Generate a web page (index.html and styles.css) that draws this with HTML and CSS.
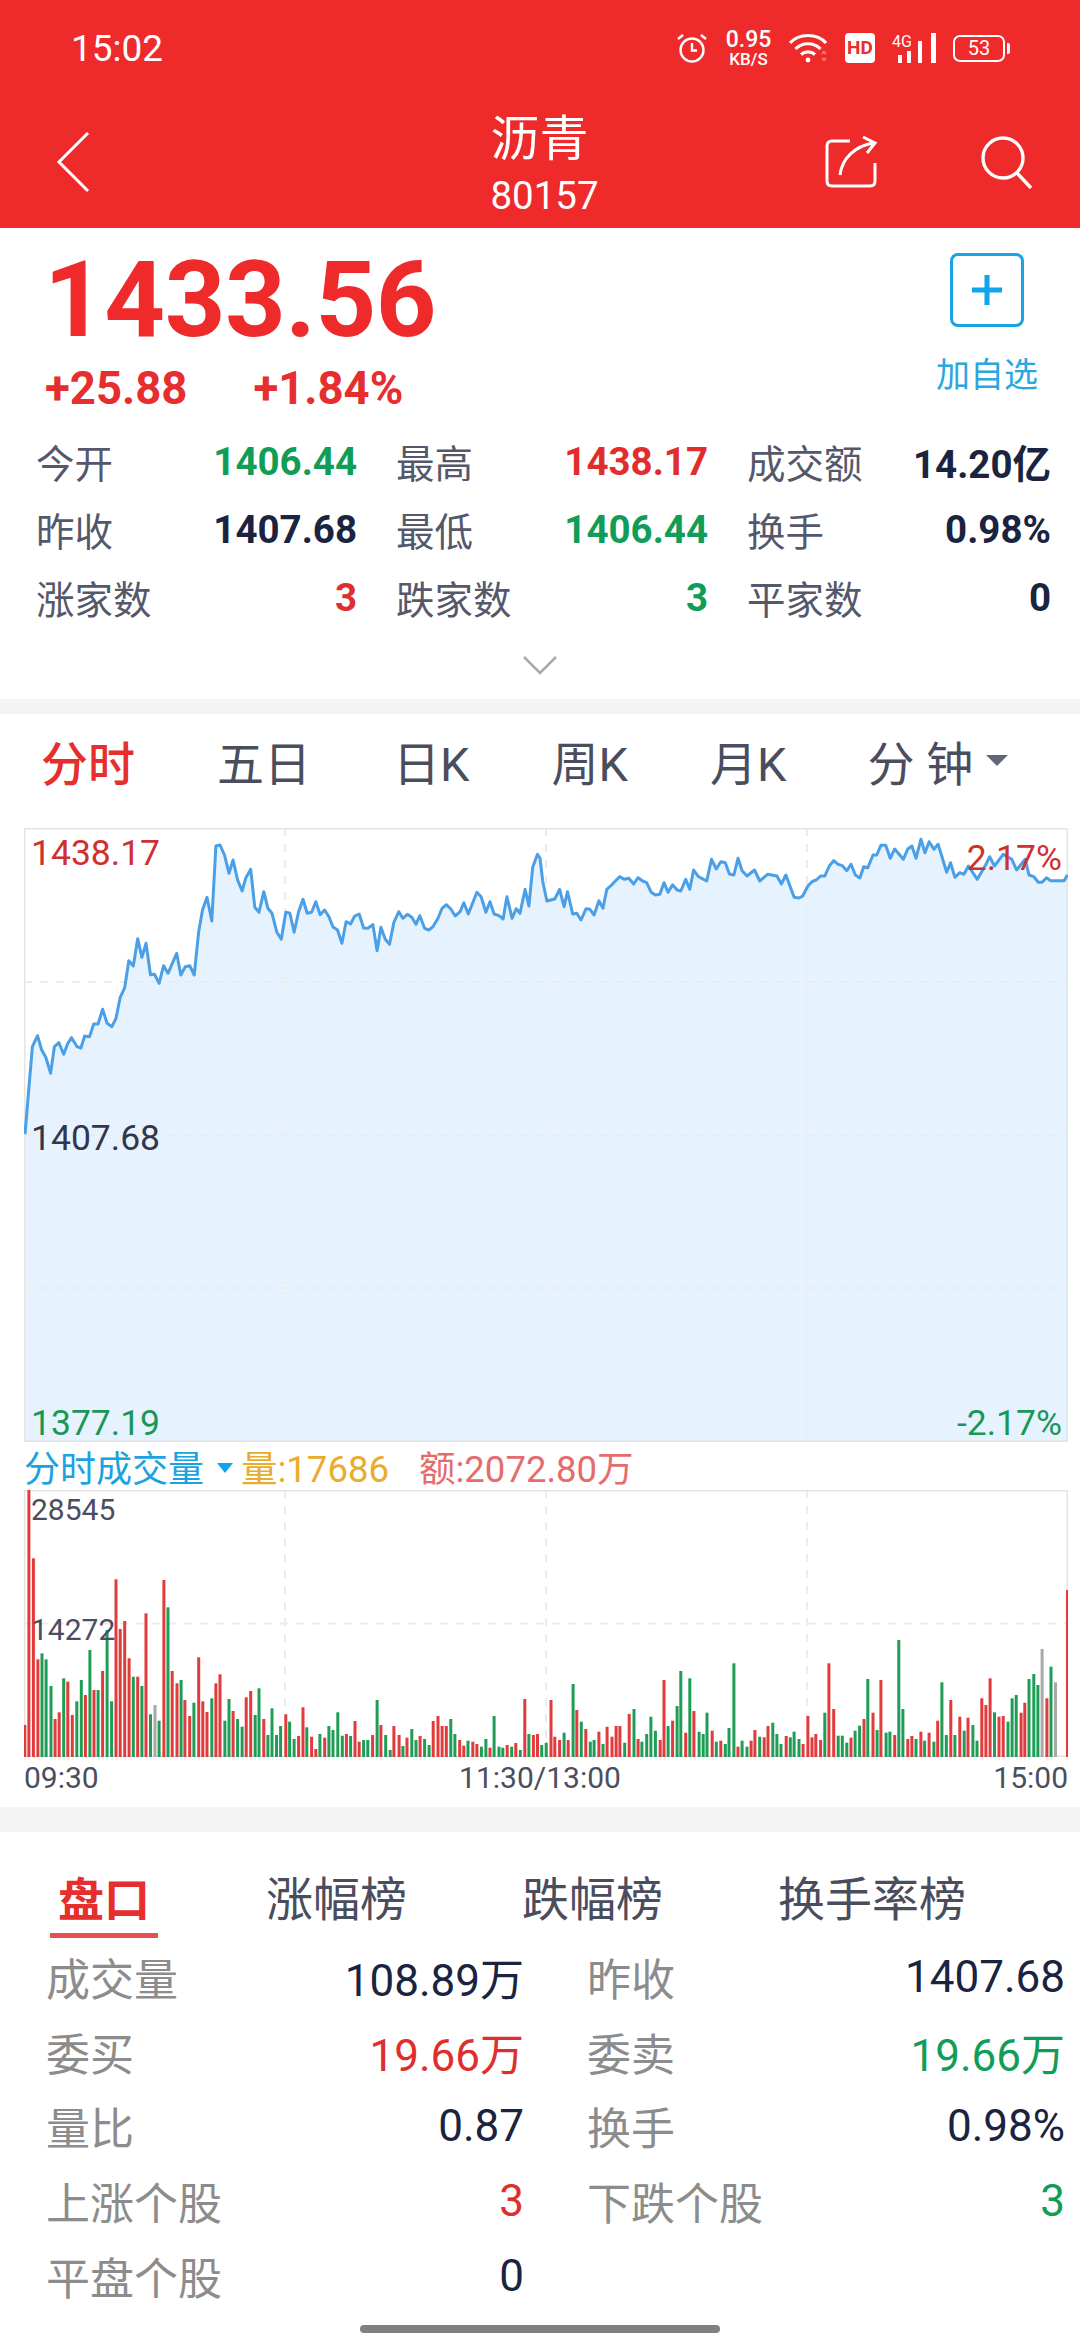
FILE: index.html
```html
<!DOCTYPE html>
<html lang="zh-CN">

<head>
    <meta charset="UTF-8">
    <title>沥青</title>
    <link rel="stylesheet" href="styles.css">
</head>

<body>
    <header class="topbar">
        <div class="status">
            <span class="status-time">15:02</span>
            <div class="status-icons">
                <svg width="32" height="30" viewBox="0 0 32 30" fill="none" stroke="#fff" stroke-width="2.4">
                    <circle cx="16" cy="17" r="11.5" />
                    <path d="M16 10v7.5h5" />
                    <path d="M2 6l5-4M30 6l-5-4" stroke-width="2.6" />
                </svg>
                <div class="net-speed">
                    <span class="net-value">0.95</span>
                    <span class="net-unit">KB/S</span>
                </div>
                <svg width="39" height="30" viewBox="0 0 39 30" fill="none" stroke="#fff" stroke-width="3.2">
                    <path d="M1 10C10 0 28 0 37 10" />
                    <path d="M6.500 16C13 9 25 9 31.500 16" />
                    <path d="M12 21.500C16 18 22 18 26 21.500" />
                    <circle cx="19" cy="27" r="2.400" fill="#fff" stroke="none" />
                    <path d="M33 21l2-2.500 2 2.500M33 25l2 2.500 2-2.500" stroke="#f78a8a" stroke-width="1.400" />
                </svg>
                <span class="hd-badge">HD</span>
                <div class="signal">
                    <span class="signal-text">4G</span>
                    <svg width="44" height="30" viewBox="0 0 44 30" fill="#fff">
                        <rect x="6" y="22" width="4" height="8" />
                        <rect x="15" y="18" width="4" height="12" />
                        <rect x="26" y="8" width="4" height="22" />
                        <rect x="39" y="0" width="5" height="30" />
                    </svg>
                </div>
                <div class="battery"><span>53</span></div>
            </div>
        </div>
        <nav class="nav">
            <svg class="nav-back" width="34" height="62" viewBox="0 0 34 62" fill="none" stroke="#fff" stroke-width="3">
                <path d="M32 2L3 31l29 29" />
            </svg>
            <div class="nav-title">
                <div class="nav-name">沥青</div>
                <div class="nav-code">80157</div>
            </div>
            <div class="nav-actions">
                <svg width="56" height="54" viewBox="0 0 56 54" fill="none" stroke="#fff" stroke-width="3">
                    <path d="M26 6H8Q3 6 3 11V46Q3 51 8 51H46Q51 51 51 46V28" />
                    <path d="M16 40C18 24 30 11 50 8" />
                    <path d="M39 2l12 6-8 10" />
                </svg>
                <svg width="54" height="54" viewBox="0 0 54 54" fill="none" stroke="#fff" stroke-width="3.400">
                    <circle cx="23" cy="23" r="20" />
                    <path d="M37 38l14 15" />
                </svg>
            </div>
        </nav>
    </header>

    <section class="quote">
        <div class="quote-head">
            <div>
                <div class="price">1433.56</div>
                <div class="change">
                    <span>+25.88</span>
                    <span>+1.84%</span>
                </div>
            </div>
            <div class="add-fav">
                <div class="add-box">
                    <svg width="34" height="34" viewBox="0 0 34 34" stroke="#0fa5ee" stroke-width="5">
                        <path d="M17 2v30M2 17h30" />
                    </svg>
                </div>
                <div class="add-text">加自选</div>
            </div>
        </div>

        <div class="stats">
            <div class="stat"><span class="stat-label">今开</span><span class="stat-value down">1406.44</span></div>
            <div class="stat"><span class="stat-label">最高</span><span class="stat-value up">1438.17</span></div>
            <div class="stat"><span class="stat-label">成交额</span><span class="stat-value">14.20亿</span></div>
            <div class="stat"><span class="stat-label">昨收</span><span class="stat-value">1407.68</span></div>
            <div class="stat"><span class="stat-label">最低</span><span class="stat-value down">1406.44</span></div>
            <div class="stat"><span class="stat-label">换手</span><span class="stat-value">0.98%</span></div>
            <div class="stat"><span class="stat-label">涨家数</span><span class="stat-value up">3</span></div>
            <div class="stat"><span class="stat-label">跌家数</span><span class="stat-value down">3</span></div>
            <div class="stat"><span class="stat-label">平家数</span><span class="stat-value">0</span></div>
        </div>

        <div class="expand">
            <svg width="34" height="20" viewBox="0 0 34 20" fill="none" stroke="#a8a8ae" stroke-width="2.500">
                <path d="M1 2l16 16L33 2" />
            </svg>
        </div>
    </section>

    <div class="band band-first"></div>

    <div class="period-tabs">
        <span class="period period-active">分时</span>
        <span class="period">五日</span>
        <span class="period">日K</span>
        <span class="period">周K</span>
        <span class="period">月K</span>
        <span class="period period-last">分 钟<i class="period-caret"></i></span>
    </div>

    <div class="chart price-chart">
        <svg id="price-svg" width="1044" height="614" viewBox="0 0 1044 614"></svg>
        <span class="chart-label label-top-left up-soft">1438.17</span>
        <span class="chart-label label-mid-left">1407.68</span>
        <span class="chart-label label-bottom-left down-soft">1377.19</span>
        <span class="chart-label label-top-right up-soft">2.17%</span>
        <span class="chart-label label-bottom-right down-soft">-2.17%</span>
    </div>

    <div class="legend">
        <span class="legend-name">分时成交量</span>
        <i class="legend-caret"></i>
        <span class="legend-vol">量:17686</span>
        <span class="legend-amt">额:2072.80万</span>
    </div>

    <div class="chart volume-chart">
        <svg id="volume-svg" width="1044" height="267" viewBox="0 0 1044 267"></svg>
        <span class="volume-label label-max">28545</span>
        <span class="volume-label label-half">14272</span>
    </div>

    <div class="axis">
        <span>09:30</span>
        <span class="axis-mid">11:30/13:00</span>
        <span class="axis-end">15:00</span>
    </div>

    <div class="band band-second"></div>

    <div class="sub-tabs">
        <span class="sub-tab sub-tab-active">盘口</span>
        <span class="sub-tab">涨幅榜</span>
        <span class="sub-tab">跌幅榜</span>
        <span class="sub-tab">换手率榜</span>
    </div>

    <div class="detail">
        <div class="detail-row"><span class="detail-label">成交量</span><span class="detail-value">108.89万</span></div>
        <div class="detail-row"><span class="detail-label">昨收</span><span class="detail-value">1407.68</span></div>
        <div class="detail-row"><span class="detail-label">委买</span><span class="detail-value up">19.66万</span></div>
        <div class="detail-row"><span class="detail-label">委卖</span><span class="detail-value down">19.66万</span></div>
        <div class="detail-row"><span class="detail-label">量比</span><span class="detail-value">0.87</span></div>
        <div class="detail-row"><span class="detail-label">换手</span><span class="detail-value">0.98%</span></div>
        <div class="detail-row"><span class="detail-label">上涨个股</span><span class="detail-value up">3</span></div>
        <div class="detail-row"><span class="detail-label">下跌个股</span><span class="detail-value down">3</span></div>
        <div class="detail-row"><span class="detail-label">平盘个股</span><span class="detail-value">0</span></div>
    </div>

    <div class="home-bar"></div>

    <script src="script.js"></script>
</body>

</html>
```

FILE: styles.css
```css
* {
    box-sizing: border-box;
}

body {
    margin: 0;
    width: 1080px;
    height: 2340px;
    overflow: hidden;
    position: relative;
    background-color: #fff;
    font-family: Roboto, "Noto Sans CJK SC", sans-serif;
    color: #1a2340;
}

.up {
    color: #e02e2e;
}

.down {
    color: #0f9d58;
}

.up-soft {
    color: #cf3030;
}

.down-soft {
    color: #1a9656;
}

/* top red bar */
.topbar {
    height: 228px;
    background-color: #ee2a2a;
    color: #fff;
}

.status {
    height: 96px;
    padding: 0 69px 0 71px;
    display: flex;
    justify-content: space-between;
    align-items: center;
}

.status-time {
    font-size: 37px;
}

.status-icons {
    display: flex;
    align-items: center;
    gap: 17px;
}

.net-speed {
    width: 47px;
    display: flex;
    flex-direction: column;
    align-items: center;
    font-weight: 500;
}

.net-value {
    font-size: 23px;
    line-height: 22px;
}

.net-unit {
    font-size: 17px;
    line-height: 16px;
}

.hd-badge {
    width: 30px;
    height: 30px;
    border-radius: 4px;
    background-color: #fff;
    color: #ee2a2a;
    font-size: 19px;
    font-weight: 700;
    line-height: 30px;
    text-align: center;
}

.signal {
    position: relative;
    width: 44px;
    height: 30px;
}

.signal svg {
    display: block;
}

.signal-text {
    position: absolute;
    left: 0;
    top: 1px;
    font-size: 16px;
    line-height: 16px;
}

.battery {
    width: 52px;
    height: 27px;
    border: 2px solid #fff;
    border-radius: 7px;
    position: relative;
    margin-right: 6px;
    font-size: 20px;
    line-height: 23px;
    text-align: center;
}

.battery::after {
    content: "";
    position: absolute;
    left: 52px;
    top: 6px;
    width: 3px;
    height: 11px;
    border-radius: 0 2px 2px 0;
    background-color: #fff;
}

.nav {
    height: 132px;
    display: grid;
    grid-template-columns: 1fr auto 1fr;
    align-items: center;
}

.nav-back {
    margin-left: 56px;
}

.nav-title {
    margin: 12px 0 0 9px;
}

.nav-name {
    font-size: 49px;
    line-height: 56px;
}

.nav-code {
    font-size: 38.500px;
    line-height: 56px;
}

.nav-actions {
    display: flex;
    justify-content: flex-end;
    gap: 100px;
    padding-right: 46px;
}

/* price block */
.quote {
    height: 471px;
}

.quote-head {
    height: 199px;
    padding: 22px 42px 0 44px;
    display: flex;
    justify-content: space-between;
}

.price {
    font-size: 106px;
    line-height: 100px;
    font-weight: 700;
    letter-spacing: -0.500px;
    color: #ee2a2a;
}

.change {
    margin: 14px 0 0 1px;
    display: flex;
    gap: 66px;
    font-size: 45.500px;
    line-height: 50px;
    font-weight: 700;
    color: #e62e2e;
}

.add-fav {
    display: flex;
    flex-direction: column;
    align-items: center;
}

.add-box {
    width: 74px;
    height: 74px;
    margin-top: 3px;
    border: 3px solid #1ba2e0;
    border-radius: 8px;
    display: flex;
    align-items: center;
    justify-content: center;
}

.add-text {
    margin-top: 25px;
    font-size: 34px;
    line-height: 46px;
    color: #2aa6e0;
}

.stats {
    padding: 0 29px 0 36px;
    display: grid;
    grid-template-columns: 321px 312px 304px;
    grid-auto-rows: 68px;
    column-gap: 39px;
}

.stat {
    display: flex;
    justify-content: space-between;
    align-items: center;
}

.stat-label {
    font-size: 38.500px;
    color: #55586a;
}

.stat-value {
    font-size: 38.500px;
    font-weight: 700;
}

.expand {
    margin-top: 24px;
    display: flex;
    justify-content: center;
}

.band {
    background-color: #f4f4f4;
}

.band-first {
    height: 15px;
}

.band-second {
    height: 25px;
}

/* chart period tabs */
.period-tabs {
    height: 114px;
    padding: 0 0 21px 41px;
    display: flex;
    align-items: center;
    gap: 82px;
    font-size: 47px;
    color: #4a4d5e;
}

.period {
    display: flex;
    align-items: center;
}

.period-active {
    font-weight: 500;
    color: #e62e2e;
}

.period-last {
    margin-left: -1px;
}

.period-caret {
    width: 0;
    height: 0;
    margin-left: 13px;
    border-left: 11px solid transparent;
    border-right: 11px solid transparent;
    border-top: 11px solid #63667a;
}

/* charts */
.chart {
    position: relative;
    width: 1044px;
    margin-left: 24px;
}

.chart svg {
    display: block;
}

.price-chart {
    height: 614px;
}

.volume-chart {
    height: 267px;
}

.chart-label {
    position: absolute;
    font-size: 35.500px;
    line-height: 40px;
}

.label-top-left {
    left: 7px;
    top: 5px;
}

.label-mid-left {
    left: 7px;
    top: 290px;
    color: #33364a;
}

.label-bottom-left {
    left: 7px;
    bottom: -1px;
}

.label-top-right {
    right: 6px;
    top: 10px;
}

.label-bottom-right {
    right: 6px;
    bottom: -1px;
}

.volume-label {
    position: absolute;
    left: 7px;
    font-size: 30px;
    line-height: 36px;
    color: #4b4e5e;
}

.label-max {
    top: 2px;
}

.label-half {
    top: 122px;
}

.legend {
    height: 48px;
    padding-left: 24px;
    display: flex;
    align-items: center;
    font-size: 36.500px;
}

.legend-name {
    font-size: 36px;
    color: #1ba2e0;
}

.legend-caret {
    width: 0;
    height: 0;
    margin: 3px 8px 0 13px;
    border-left: 8px solid transparent;
    border-right: 8px solid transparent;
    border-top: 10px solid #0fa5ee;
}

.legend-vol {
    width: 178px;
    color: #e8ad2f;
}

.legend-amt {
    color: #e56c6c;
}

.axis {
    height: 50px;
    width: 1044px;
    margin-left: 24px;
    padding-bottom: 10px;
    display: grid;
    grid-template-columns: 1fr auto 1fr;
    align-items: center;
    font-size: 30px;
    color: #4b4e5e;
}

.axis-mid {
    margin-right: 12px;
}

.axis-end {
    text-align: right;
}

/* bottom list */
.sub-tabs {
    height: 108px;
    padding: 41px 0 0 50px;
    display: flex;
    align-items: flex-start;
    gap: 115px;
    font-size: 47px;
    line-height: 54px;
    color: #4a4d5e;
}

.sub-tab-active {
    width: 108px;
    margin-right: -7px;
    padding-bottom: 6px;
    border-bottom: 5px solid #e85050;
    font-size: 46px;
    font-weight: 700;
    text-align: center;
    white-space: nowrap;
    color: #e62e2e;
}

.detail {
    padding-left: 46px;
    display: grid;
    grid-template-columns: 478px 478px;
    grid-auto-rows: 74.600px;
    column-gap: 63px;
}

.detail-row {
    display: flex;
    justify-content: space-between;
    align-items: center;
}

.detail-label {
    font-size: 44px;
    color: #8c8c8c;
}

.detail-value {
    font-size: 44px;
}

.home-bar {
    position: absolute;
    left: 360px;
    bottom: 7px;
    width: 360px;
    height: 8px;
    border-radius: 4px;
    background-color: #808080;
}
```

FILE: script.js
```js
// values read off the original chart, in 2.904x horizontal / 3x vertical pixels
const SCALE_X = 2.904;
const SCALE_Y = 3;

const morning = [[94,710],[109,677],[121,720],[133,742],[147,790],[158,710],[171,698],[185,733],[197,700],[208,683],[224,710],[235,714],[246,678],[260,680],[272,642],[285,642],[298,598],[311,640],[325,650],[337,625],[349,562],[362,533],[374,452],[387,468],[400,386],[412,442],[424,400],[437,494],[449,493],[462,520],[475,467],[488,490],[513,430],[525,495],[538,470],[551,467],[564,495],[577,365],[588,300],[601,262],[615,333],[627,108],[639,105],[652,135],[665,190],[677,150],[690,210],[703,243],[714,203],[728,178],[740,292],[752,307],[766,245],[778,295],[790,310],[804,367],[817,388],[830,307],[842,310],[854,367],[867,305],[880,268],[892,310],[905,307],[917,275],[930,314],[943,300],[955,320],[967,351],[980,360],[993,400],[1005,335],[1018,342],[1030,318],[1043,312],[1056,354],[1068,355],[1083,344],[1095,422],[1106,352],[1119,388],[1131,403],[1144,337],[1158,305],[1170,325],[1183,313],[1196,322],[1208,343],[1219,317],[1233,355],[1245,360],[1257,350],[1272,325],[1284,295],[1296,284],[1309,297],[1322,318],[1336,305],[1347,278],[1360,312],[1385,247],[1397,260],[1411,307],[1423,275],[1435,312],[1449,317],[1461,327],[1472,260],[1487,325],[1499,296],[1510,310],[1525,238],[1536,288],[1547,172],[1561,133]];

const afternoon = [[0,145],[8,215],[20,273],[43,267],[57,238],[70,290],[80,245],[95,312],[107,310],[119,330],[134,296],[145,298],[157,315],[171,272],[183,295],[194,238],[208,225],[231,200],[245,208],[258,205],[272,222],[285,203],[298,213],[310,218],[323,247],[335,255],[348,253],[360,218],[372,247],[385,224],[398,240],[409,243],[423,208],[435,238],[446,180],[460,200],[484,213],[498,148],[512,177],[525,155],[538,158],[550,192],[563,195],[575,145],[587,182],[601,198],[623,180],[638,213],[661,193],[688,198],[701,222],[714,195],[738,262],[752,264],[763,258],[778,228],[790,215],[802,210],[815,198],[827,198],[840,168],[853,152],[866,163],[878,167],[891,182],[903,163],[916,195],[929,204],[940,170],[952,173],[967,135],[978,135],[990,106],[1004,106],[1017,145],[1030,117],[1055,148],[1068,117],[1080,108],[1092,145],[1106,88],[1118,128],[1130,95],[1144,118],[1156,103],[1181,187],[1192,158],[1205,202],[1219,188],[1231,193],[1244,168],[1270,208],[1294,165],[1306,140],[1320,168],[1345,133],[1370,148],[1384,180],[1409,148],[1420,195],[1434,200],[1447,217],[1458,217],[1471,203],[1483,212],[1522,212],[1532,195]];

const barsLeft = "72r975 84r268 97r475 110r778 122g760 134g778 148g858 160r957 172r937 185g835 197r845 210r945 223g904 236g840 248r885 261g750 273r870 285g870 298r813 311g690 324g904 337r538 349r687 362r663 375r775 387g830 400r830 412g858 424r640 437g943 450n915 462g962 476r540 488g622 500r813 514r850 526g840 537r900 551r948 563g908 577r772 589r904 601r936 615g895 627r850 639r823 653g962 665g897 677r933 690g957 703g980 715r892 728r873 741g945 752g865 766r957 778g1005 790g925 803g1005 815g978 830r943 841g965 854g1017 867r1008 880r922 891g982 905r1010 917r1047 929g1002 943r1013 955g978 967g990 981g937 994g1007 1006r1002 1018g1008 1031r963 1043r1025 1056g1020 1068g1020 1082r1005 1095g900 1106r975 1120g1005 1133g1050 1144r978 1159r1005 1170g1038 1182r1013 1196g987 1208g1020 1220r1008 1233g1017 1246g1035 1258r963 1272r948 1284r978 1296r978 1309g957 1321g1002 1335r1020 1347r1037 1359g1022 1373r1025 1385r1032 1398g1040 1411g1017 1423r1043 1435g948 1449g1040 1460g1043 1473r1035 1486g1040 1498r1029 1511g1050 1524r897 1536g1002 1549r1005 1561r1002";

const barsRight = "5g1035 18g1028 32r900 43r1010 57r1020 70g998 82r1020 96g852 107r930 120g965 133r987 146g1025 157g1020 171r995 183g1032 195r980 209r1010 221r978 232r978 246g1028 259r942 273g927 285r1017 296g1025 310g1002 322g950 335g992 349r1020 360r840 372g978 385r962 398g918 409g813 423r998 435g835 447r933 462g995 474g1002 485g938 500r992 512g1025 525r1022 538g1032 549g984 563g790 575r1040 587g1022 601g1040 613r1022 624r990 638g1010 651r1012 662r978 676g968 688g1002 700g1032 715r1008 727g1012 738g995 752g1017 764r1032 778r948 790r1012 801r1002 815r1020 827g938 839r790 853r927 866g1007 878g1007 891g1028 903r1013 915g992 928g977 941r957 952g837 967r938 979g990 990r840 1005g998 1016g995 1030r1005 1042g720 1054g927 1068r1017 1080r1008 1092g1017 1106r995 1117g1022 1130r998 1144g1025 1155r962 1167g847 1180g1005 1193r900 1205g1005 1219r950 1232g992 1243r953 1257g975 1269g1022 1283r895 1295r915 1307r835 1320g937 1333r950 1345r948 1359g965 1371g895 1383g885 1397r938 1408r908 1420g837 1434g822 1446g855 1458n747 1472r895 1484g800 1497n847";

const barColors = { r: "#e23b3b", g: "#1f9d57", n: "#a8a8a8" };
const gridLine = { stroke: "#ececec", "stroke-width": 2, "stroke-dasharray": "8 8", fill: "none" };

function add(svg, tag, attrs) {
    const el = document.createElementNS("http://www.w3.org/2000/svg", tag);
    for (const key in attrs) {
        el.setAttribute(key, attrs[key]);
    }
    svg.appendChild(el);
}

function drawGrid(svg, w, h) {
    add(svg, "path", { ...gridLine, d: `M0 ${h / 2}H${w}` });
    [261, 522, 783].forEach(x => {
        add(svg, "path", { ...gridLine, d: `M${x} 0V${h}` });
    });
}

function drawBorder(svg, w, h) {
    add(svg, "rect", { x: 0.5, y: 0.5, width: w - 1, height: h - 1, fill: "none", stroke: "#e4e4e4", "stroke-width": 2 });
}

function drawPrice() {
    const svg = document.getElementById("price-svg");
    const pts = [[1, 306]];
    morning.forEach(p => pts.push([p[0] / SCALE_X - 24, p[1] / SCALE_Y - 18]));
    afternoon.forEach(p => pts.push([516 + p[0] / SCALE_X, p[1] / SCALE_Y - 18]));
    const line = pts.map(p => p[0].toFixed(1) + "," + p[1].toFixed(1)).join(" ");

    add(svg, "polygon", { points: `${line} 1044,614 1,614`, fill: "#e6f3fe" });
    add(svg, "path", { ...gridLine, d: "M0 154H1044M0 460H1044" });
    drawGrid(svg, 1044, 614);
    drawBorder(svg, 1044, 614);
    add(svg, "polyline", { points: line, fill: "none", stroke: "#4a9fe6", "stroke-width": 3, "stroke-linejoin": "round" });
}

function drawBars(svg, data, offset) {
    data.split(" ").forEach(item => {
        const m = item.match(/(\d+)([rgn])(\d+)/);
        const top = Number(m[3]) / SCALE_Y - 90;
        add(svg, "rect", {
            x: (offset + Number(m[1]) / SCALE_X - 1.5).toFixed(1),
            y: top.toFixed(1),
            width: 3,
            height: (267 - top).toFixed(1),
            fill: barColors[m[2]]
        });
    });
}

function drawVolume() {
    const svg = document.getElementById("volume-svg");
    drawGrid(svg, 1044, 267);
    drawBorder(svg, 1044, 267);
    drawBars(svg, barsLeft, -24);
    drawBars(svg, barsRight, 516);
    add(svg, "rect", { x: 1042, y: 100, width: 2, height: 167, fill: barColors.r });
}

drawPrice();
drawVolume();
```
